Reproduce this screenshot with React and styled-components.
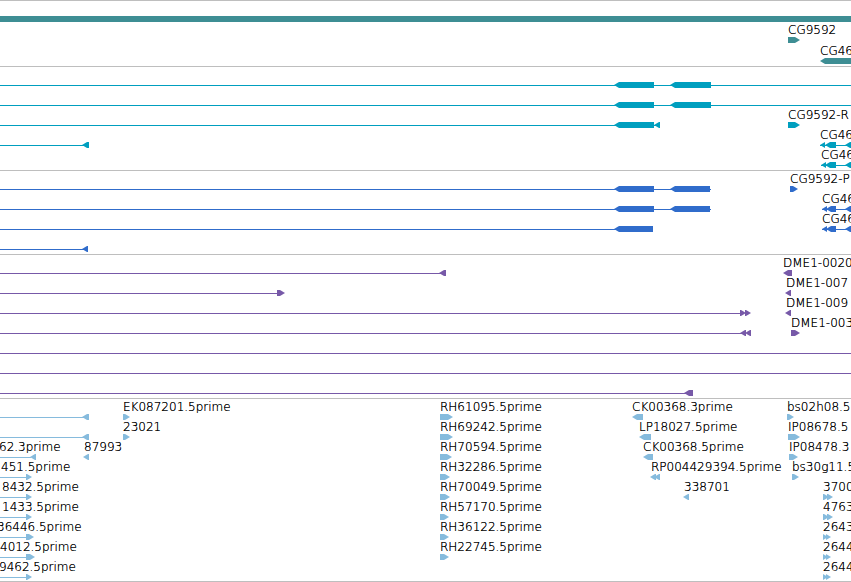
import React from 'react';
import styled, { createGlobalStyle, ThemeProvider } from 'styled-components';

const theme = {
  colors: {
    rule: '#bebebe',
    gene: '#3e8e94',
    transcript: '#009fbf',
    cds: '#306ccb',
    oligo: '#7759a8',
    est: '#86bbdd'
  }
};

// Every span is [start, end, direction]; a null end runs off the right edge.
const tracks = [
  {
    name: 'gene',
    lanes: [
      { spans: [[0, null]] },
      { spans: [[788, 800, 'right']], labels: [[788, 'CG9592']] },
      { spans: [[820, null, 'left']], labels: [[820, 'CG46']] }
    ]
  },
  {
    name: 'transcript',
    lanes: [
      {
        lines: [[0, null]],
        spans: [[614, 654, 'left'], [670, 711, 'left']]
      },
      {
        lines: [[0, null]],
        spans: [[614, 654, 'left'], [670, 711, 'left']]
      },
      {
        lines: [[0, 656]],
        spans: [[614, 654, 'left'], [654, 660, 'left'], [788, 800, 'right']],
        labels: [[788, 'CG9592-R']]
      },
      {
        lines: [[0, 84], [820, null]],
        spans: [
          [82, 89, 'left'],
          [820, 825, 'left'],
          [825, 836, 'left'],
          [845, null, 'left']
        ],
        labels: [[820, 'CG46']]
      },
      {
        lines: [[821, null]],
        spans: [
          [821, 826, 'left'],
          [825, 836, 'left'],
          [845, null, 'left']
        ],
        labels: [[821, 'CG46']]
      }
    ]
  },
  {
    name: 'cds',
    lanes: [
      {
        lines: [[0, 711]],
        spans: [
          [614, 654, 'left'],
          [670, 710, 'left'],
          [790, 798, 'right']
        ],
        labels: [[790, 'CG9592-P']]
      },
      {
        lines: [[0, 711], [822, null]],
        spans: [
          [614, 654, 'left'],
          [670, 710, 'left'],
          [822, 827, 'left'],
          [826, 836, 'left'],
          [845, null, 'left']
        ],
        labels: [[822, 'CG46']]
      },
      {
        lines: [[0, 616], [822, null]],
        spans: [
          [614, 653, 'left'],
          [822, 827, 'left'],
          [826, 836, 'left'],
          [845, null, 'left']
        ],
        labels: [[822, 'CG46']]
      },
      { lines: [[0, 84]], spans: [[82, 88, 'left']] }
    ]
  },
  {
    name: 'oligo',
    lanes: [
      {
        lines: [[0, 441]],
        spans: [[439, 446, 'left'], [783, 792, 'left']],
        labels: [[783, 'DME1-0020']]
      },
      {
        lines: [[0, 277]],
        spans: [[277, 285, 'right'], [785, 791, 'left']],
        labels: [[786, 'DME1-007']]
      },
      {
        lines: [[0, 740]],
        spans: [
          [740, 746, 'right'],
          [745, 751, 'right'],
          [785, 791, 'left']
        ],
        labels: [[786, 'DME1-009']]
      },
      {
        lines: [[0, 742]],
        spans: [
          [740, 746, 'left'],
          [745, 751, 'left'],
          [791, 800, 'right']
        ],
        labels: [[791, 'DME1-003']]
      },
      { lines: [[0, null]] },
      { lines: [[0, null]] },
      { lines: [[0, 686]], spans: [[684, 693, 'left']] }
    ]
  },
  {
    name: 'est',
    lanes: [
      {
        lines: [[0, 84]],
        spans: [
          [82, 89, 'left'],
          [123, 130, 'right'],
          [440, 453, 'right'],
          [632, 643, 'left'],
          [787, 794, 'right']
        ],
        labels: [
          [123, 'EK087201.5prime'],
          [440, 'RH61095.5prime'],
          [632, 'CK00368.3prime'],
          [787, 'bs02h08.5']
        ]
      },
      {
        lines: [[0, 84]],
        spans: [
          [82, 89, 'left'],
          [123, 130, 'right'],
          [440, 453, 'right'],
          [639, 651, 'left'],
          [788, 800, 'right']
        ],
        labels: [
          [123, '23021'],
          [440, 'RH69242.5prime'],
          [639, 'LP18027.5prime'],
          [788, 'IP08678.5']
        ]
      },
      {
        lines: [[0, 31]],
        spans: [
          [30, 36, 'left'],
          [83, 89, 'left'],
          [440, 452, 'right'],
          [643, 653, 'left'],
          [789, 798, 'right']
        ],
        labels: [
          [-1, '62.3prime'],
          [84, '87993'],
          [440, 'RH70594.5prime'],
          [643, 'CK00368.5prime'],
          [789, 'IP08478.3']
        ]
      },
      {
        lines: [[0, 26]],
        spans: [
          [26, 32, 'right'],
          [440, 450, 'right'],
          [650, 656, 'left'],
          [654, 660, 'left'],
          [792, 799, 'right']
        ],
        labels: [
          [1, '451.5prime'],
          [440, 'RH32286.5prime'],
          [651, 'RP004429394.5prime'],
          [792, 'bs30g11.5']
        ]
      },
      {
        lines: [[0, 26]],
        spans: [
          [26, 32, 'right'],
          [440, 450, 'right'],
          [683, 689, 'left'],
          [823, 829, 'right'],
          [827, 833, 'right']
        ],
        labels: [
          [2, '8432.5prime'],
          [440, 'RH70049.5prime'],
          [684, '338701'],
          [823, '3700']
        ]
      },
      {
        lines: [[0, 26]],
        spans: [
          [26, 32, 'right'],
          [440, 449, 'right'],
          [823, 829, 'right'],
          [827, 833, 'right']
        ],
        labels: [
          [2, '1433.5prime'],
          [440, 'RH57170.5prime'],
          [823, '4763']
        ]
      },
      {
        lines: [[0, 26]],
        spans: [
          [26, 34, 'right'],
          [440, 449, 'right'],
          [823, 828, 'right'],
          [826, 831, 'right']
        ],
        labels: [
          [-3, '36446.5prime'],
          [440, 'RH36122.5prime'],
          [823, '2643']
        ]
      },
      {
        lines: [[0, 26]],
        spans: [
          [26, 35, 'right'],
          [440, 449, 'right'],
          [823, 828, 'right'],
          [826, 831, 'right']
        ],
        labels: [
          [0, '4012.5prime'],
          [440, 'RH22745.5prime'],
          [823, '2644']
        ]
      },
      {
        lines: [[0, 26]],
        spans: [
          [26, 32, 'right'],
          [823, 828, 'right'],
          [826, 831, 'right']
        ],
        labels: [[-1, '9462.5prime'], [823, '2644']]
      }
    ]
  }
];

// ========================== STYLES:BEGIN ========================== //
const GlobalStyle = createGlobalStyle`
  body {
    margin: 0;
    background: #fff;
    color: #000;
    font-family: 'DejaVu Sans', sans-serif;
    font-size: 12px;
    font-weight: 200;
    line-height: 14px;
  }
`;

const Browser = styled.main`
  overflow: hidden;
  border-bottom: 1px solid ${props => props.theme.colors.rule};
`;

const TrackWrapper = styled.section`
  display: flex;
  flex-direction: column;
  padding: ${props => (props.$name === 'gene' ? '0 0 2px' : '1px 0 2px')};
  border-top: 1px solid ${props => props.theme.colors.rule};
  color: ${props => props.theme.colors[props.$name]};

  &:last-child {
    padding-bottom: 1px;
  }
`;

// Labels share the upper cell of a lane, glyphs the lower one.
const Lane = styled.div`
  display: grid;
  grid-template-columns: minmax(0, 1fr);
  grid-template-rows: ${props => (props.$name === 'gene' ? '15px' : '14px')} 6px;
`;

const Label = styled.span`
  grid-area: 1 / 1;
  align-self: end;
  margin-left: ${props => props.$start}px;
  color: #000;
  text-shadow: 0 0 #000;
  white-space: nowrap;
`;

const Glyph = styled.span`
  grid-area: 2 / 1;
  margin-left: ${props => props.$start}px;
  width: ${props =>
    props.$end === null ? 'auto' : `${props.$end - props.$start}px`};
  background: currentColor;
`;

const Line = styled(Glyph)`
  align-self: center;
  height: 1px;
  margin-top: 1px;
`;

const heads = {
  left: 'polygon(0 50%, 5px 0, 100% 0, 100% 100%, 5px 100%)',
  right:
    'polygon(0 0, calc(100% - 5px) 0, 100% 50%, calc(100% - 5px) 100%, 0 100%)'
};

const Block = styled(Glyph)`
  height: 6px;
  clip-path: ${props => heads[props.$direction] || 'none'};
`;
// ========================== STYLES:END ========================== //

const Track = ({ name, lanes }) => (
  <TrackWrapper $name={name}>
    {lanes.map(({ lines = [], spans = [], labels = [] }, index) => (
      <Lane key={index} $name={name}>
        {labels.map(([start, text]) => (
          <Label key={start} $start={start}>
            {text}
          </Label>
        ))}
        {lines.map(([start, end]) => (
          <Line key={start} $start={start} $end={end} />
        ))}
        {spans.map(([start, end, direction]) => (
          <Block
            key={start}
            $start={start}
            $end={end}
            $direction={direction}
          />
        ))}
      </Lane>
    ))}
  </TrackWrapper>
);

const App = () => (
  <ThemeProvider theme={theme}>
    <GlobalStyle />
    <Browser>
      {tracks.map(({ name, lanes }) => (
        <Track key={name} name={name} lanes={lanes} />
      ))}
    </Browser>
  </ThemeProvider>
);

export default App;
